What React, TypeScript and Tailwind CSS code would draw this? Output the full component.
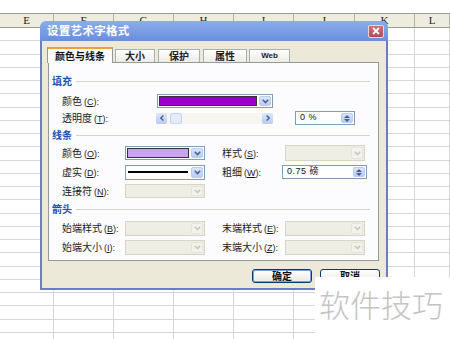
import React from "react"

const columns = [
  { label: "E", w: "w-[54px]" },
  { label: "F", w: "w-[60px]" },
  { label: "G", w: "w-[60px]" },
  { label: "H", w: "w-[60px]" },
  { label: "I", w: "w-[60px]" },
  { label: "J", w: "w-[61px]" },
  { label: "K", w: "w-[60px]" },
  { label: "L", w: "flex-1" },
]

const cjk = "font-['Noto_Sans_CJK_SC','Liberation_Sans',sans-serif]"

function Chevron({ disabled }: { disabled?: boolean }) {
  return (
    <svg width="7" height="5" viewBox="0 0 7 5">
      <path d="M0.8 0.8 L3.5 3.6 L6.2 0.8" fill="none" stroke={disabled ? "#c9c7ba" : "#4d6185"} strokeWidth="1.5" />
    </svg>
  )
}

function DropButton({ disabled }: { disabled?: boolean }) {
  return (
    <div
      className={`w-[12px] ml-[2px] flex items-center justify-center rounded-[2px] border ${
        disabled ? "border-[#e6e4da] bg-[#f3f2ec]" : "border-[#b9cbf3] bg-gradient-to-b from-[#dbe6fd] to-[#b7cbf6]"
      }`}
    >
      <Chevron disabled={disabled} />
    </div>
  )
}

function Combo({ w, h, children, disabled }: { w: string; h: string; children?: React.ReactNode; disabled?: boolean }) {
  return (
    <div
      className={`${w} ${h} flex p-px border ${
        disabled ? "border-[#d6d4c7] bg-[#efeee5]" : "border-[#7f9db9] bg-white"
      }`}
    >
      <div className="flex-1 flex items-center">{children}</div>
      <DropButton disabled={disabled} />
    </div>
  )
}

function SpinBox({ w, text }: { w: string; text: string }) {
  return (
    <div className={`${w} h-[14px] flex p-px border border-[#7f9db9] bg-white`}>
      <div className="flex-1 flex items-center pl-[3px] text-[9px] text-[#111] font-['Liberation_Sans','Noto_Sans_CJK_SC',sans-serif] tracking-[0.5px]">
        {text}
      </div>
      <div className="w-[12px] flex flex-col items-center justify-center gap-px rounded-[2px] border border-[#b9cbf3] bg-gradient-to-b from-[#dbe6fd] to-[#b7cbf6]">
        <svg width="6" height="3" viewBox="0 0 6 3">
          <path d="M0 3 L3 0 L6 3 Z" fill="#4d6185" />
        </svg>
        <svg width="6" height="3" viewBox="0 0 6 3">
          <path d="M0 0 L3 3 L6 0 Z" fill="#4d6185" />
        </svg>
      </div>
    </div>
  )
}

function Label({ text, k, w }: { text: string; k: string; w: string }) {
  return (
    <div className={`${w} shrink-0 text-[10px] leading-none text-[#1a1a1a]`}>
      {text}
      <span className="ml-[2px] font-['Liberation_Sans',sans-serif] text-[9px]">
        (<span className="underline">{k}</span>):
      </span>
    </div>
  )
}

function GroupHeader({ text, mt }: { text: string; mt: string }) {
  return (
    <div className={`${mt} h-[12px] flex items-center pl-[3px] pr-[8px]`}>
      <span className="text-[10px] leading-none font-bold text-[#2150b0]">{text}</span>
      <div className="flex-1 h-px ml-[4px] bg-[#d5d3c6]" />
    </div>
  )
}

function Row({ mt, children }: { mt: string; children: React.ReactNode }) {
  return <div className={`${mt} h-[16px] flex items-center pl-[13px]`}>{children}</div>
}

export default function App() {
  return (
    <div className="relative w-[450px] h-[339px] overflow-hidden bg-white">
      {/* 표 배경 */}
      <div className="pt-[13px]">
        <div className="flex h-[15px] border-y border-[#9d9b8c] bg-[#eeecdf]">
          {columns.map((c) => (
            <div
              key={c.label}
              className={`${c.w} shrink-0 border-r border-[#b4b2a4] flex items-center justify-center text-[11px] leading-none text-[#222] font-['Liberation_Serif',serif]`}
            >
              {c.label}
            </div>
          ))}
        </div>
        {Array.from({ length: 24 }, (_, i) => (
          <div key={i} className="flex h-[13.25px]">
            {columns.map((c) => (
              <div key={c.label} className={`${c.w} shrink-0 border-r border-b border-[#d6d6d6]`} />
            ))}
          </div>
        ))}
      </div>

      {/* 대화상자 */}
      <div className={`absolute left-[40px] top-[21px] w-[348px] h-[269px] flex flex-col ${cjk}`}>
        <div className="h-[20px] flex items-center justify-between pl-[7px] pr-[4px] rounded-t-[6px] bg-gradient-to-b from-[#8badec] to-[#6a8edc]">
          <span className="text-[11.5px] leading-none font-bold text-white tracking-[0.3px]">设置艺术字格式</span>
          <div className="w-[16px] h-[13px] rounded-[2px] border border-[#e8d6d8] bg-gradient-to-b from-[#d2707a] to-[#b8485a] flex items-center justify-center">
            <svg width="8" height="8" viewBox="0 0 8 8">
              <path d="M1 1 L7 7 M7 1 L1 7" stroke="white" strokeWidth="1.8" />
            </svg>
          </div>
        </div>

        <div className="flex-1 bg-[#ece9d8] border-x-2 border-b-2 border-[#6d7cc6] px-[6px] pt-[6px]">
          {/* 탭 */}
          <div className="flex items-end h-[15px] -ml-px">
            <div className="relative z-10 w-[66px] h-[16px] -mb-px border-x border-t-2 border-[#919b9c] border-t-[#e8a33c] bg-[#fcfcfe] flex items-center justify-center text-[10px] leading-none font-bold text-[#111]">
              颜色与线条
            </div>
            <div className="ml-[2px] w-[40px] h-[13px] border-x border-t border-[#a8b0b1] bg-gradient-to-b from-white to-[#ecebe5] flex items-center justify-center text-[10px] leading-none font-bold text-[#222]">
              大小
            </div>
            <div className="ml-[3px] w-[42px] h-[13px] border-x border-t border-[#a8b0b1] bg-gradient-to-b from-white to-[#ecebe5] flex items-center justify-center text-[10px] leading-none font-bold text-[#222]">
              保护
            </div>
            <div className="ml-[3px] w-[44px] h-[13px] border-x border-t border-[#a8b0b1] bg-gradient-to-b from-white to-[#ecebe5] flex items-center justify-center text-[10px] leading-none font-bold text-[#222]">
              属性
            </div>
            <div className="ml-[2px] w-[41px] h-[13px] border-x border-t border-[#a8b0b1] bg-gradient-to-b from-white to-[#ecebe5] flex items-center justify-center text-[8px] leading-none font-bold text-[#222] font-['Liberation_Sans',sans-serif]">
              Web
            </div>
          </div>

          {/* 패널 */}
          <div className="w-[331px] h-[199px] border border-[#919b9c] bg-[#fcfcfe]">
            <GroupHeader text="填充" mt="mt-[12px]" />
            <Row mt="mt-[6px]">
              <Label text="颜色" k="C" w="w-[95px]" />
              <Combo w="w-[116px]" h="h-[14px]">
                <div className="w-full h-[10px] border border-[#333] bg-[#9b00c9]" />
              </Combo>
            </Row>
            <Row mt="mt-[1px]">
              <Label text="透明度" k="T" w="w-[94px]" />
              <div className="w-[117px] h-[11px] flex items-stretch bg-[#f6f5f0]">
                <div className="w-[11px] rounded-[2px] bg-gradient-to-b from-[#dbe6fd] to-[#b7cbf6] flex items-center justify-center">
                  <svg width="4" height="6" viewBox="0 0 4 6">
                    <path d="M3.4 0.5 L0.8 3 L3.4 5.5" fill="none" stroke="#4d6185" strokeWidth="1.4" />
                  </svg>
                </div>
                <div className="ml-[3px] w-[12px] rounded-[2px] border border-[#c8d5f2] bg-[#e4ebfb]" />
                <div className="flex-1" />
                <div className="w-[11px] rounded-[2px] bg-gradient-to-b from-[#dbe6fd] to-[#b7cbf6] flex items-center justify-center">
                  <svg width="4" height="6" viewBox="0 0 4 6">
                    <path d="M0.6 0.5 L3.2 3 L0.6 5.5" fill="none" stroke="#4d6185" strokeWidth="1.4" />
                  </svg>
                </div>
              </div>
              <div className="ml-[22px]">
                <SpinBox w="w-[60px]" text="0 %" />
              </div>
            </Row>

            <GroupHeader text="线条" mt="mt-[3px]" />
            <Row mt="mt-[4px]">
              <Label text="颜色" k="O" w="w-[63px]" />
              <Combo w="w-[80px]" h="h-[14px]">
                <div className="w-full h-[10px] border border-[#333] bg-[#c9a2f2]" />
              </Combo>
              <div className="ml-[17px]">
                <Label text="样式" k="S" w="w-[63px]" />
              </div>
              <Combo w="w-[80px]" h="h-[16px]" disabled />
            </Row>
            <Row mt="mt-[3px]">
              <Label text="虚实" k="D" w="w-[63px]" />
              <Combo w="w-[80px]" h="h-[15px]">
                <div className="w-full h-[2px] bg-black mx-px" />
              </Combo>
              <div className="ml-[17px]">
                <Label text="粗细" k="W" w="w-[60px]" />
              </div>
              <SpinBox w="w-[85px]" text="0.75 磅" />
            </Row>
            <Row mt="mt-[3px]">
              <Label text="连接符" k="N" w="w-[63px]" />
              <Combo w="w-[80px]" h="h-[14px]" disabled />
            </Row>

            <GroupHeader text="箭头" mt="mt-[4px]" />
            <Row mt="mt-[5px]">
              <Label text="始端样式" k="B" w="w-[63px]" />
              <Combo w="w-[80px]" h="h-[15px]" disabled />
              <div className="ml-[17px]">
                <Label text="末端样式" k="E" w="w-[63px]" />
              </div>
              <Combo w="w-[80px]" h="h-[15px]" disabled />
            </Row>
            <Row mt="mt-[3px]">
              <Label text="始端大小" k="I" w="w-[63px]" />
              <Combo w="w-[80px]" h="h-[15px]" disabled />
              <div className="ml-[17px]">
                <Label text="末端大小" k="Z" w="w-[63px]" />
              </div>
              <Combo w="w-[80px]" h="h-[15px]" disabled />
            </Row>
          </div>

          {/* 버튼 */}
          <div className="mt-[8px] flex justify-end gap-[8px]">
            <button className="w-[60px] h-[14px] rounded-[3px] border border-[#003c74] bg-gradient-to-b from-white to-[#ebe9e0] shadow-[inset_0_0_0_1px_#7ba2e7] text-[10px] leading-none font-bold text-[#111]">
              确定
            </button>
            <button className="w-[60px] h-[14px] rounded-[3px] border border-[#003c74] bg-gradient-to-b from-white to-[#ebe9e0] text-[10px] leading-none font-bold text-[#111]">
              取消
            </button>
          </div>
        </div>
      </div>

      {/* 워터마크 */}
      <div className="absolute left-[315px] top-[277px] w-[135px] h-[62px] bg-white pl-[4px] pt-[11px]">
        <span className={`text-[31px] leading-none font-light text-[#c4c4c4] ${cjk}`}>软件技巧</span>
      </div>
    </div>
  )
}
